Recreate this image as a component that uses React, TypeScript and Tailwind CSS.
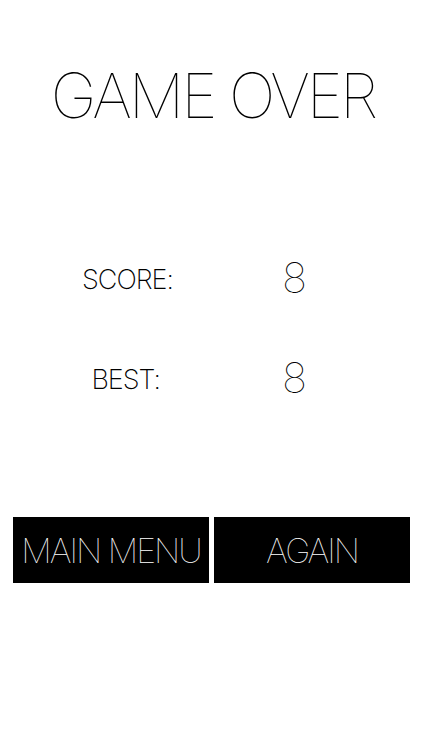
export default function App() {
  const font = { fontFamily: '"Inter", "Helvetica Neue", sans-serif' };
  return (
    <div className="w-[423px] h-[750px] bg-white text-black flex flex-col antialiased" style={font}>
      <div className="h-[56px]" />
      <h1 className="text-center text-[62px] leading-[80px] font-thin tracking-[-3px] pl-[3px]">GAME OVER</h1>
      <div className="h-[110px]" />
      <div className="grid grid-cols-[190px_1fr] items-center h-[60px]">
        <span className="justify-self-end pr-[17px] text-[27px] font-extralight tracking-[-1px]">SCORE:</span>
        <span className="pl-[92px] pb-[5px] text-[42px] font-thin">8</span>
      </div>
      <div className="h-[40px]" />
      <div className="grid grid-cols-[190px_1fr] items-center h-[60px]">
        <span className="justify-self-end pr-[30px] text-[27px] font-extralight tracking-[-1px]">BEST:</span>
        <span className="pl-[92px] pb-[5px] text-[42px] font-thin">8</span>
      </div>
      <div className="h-[111px]" />
      <div className="flex gap-[5px] px-[13px]">
        <button className="w-[196px] h-[66px] bg-black text-white text-[34px] font-thin tracking-[-2px] flex items-center justify-center">MAIN MENU</button>
        <button className="w-[196px] h-[66px] bg-black text-white text-[34px] font-thin tracking-[-2px] flex items-center justify-center">AGAIN</button>
      </div>
    </div>
  );
}
